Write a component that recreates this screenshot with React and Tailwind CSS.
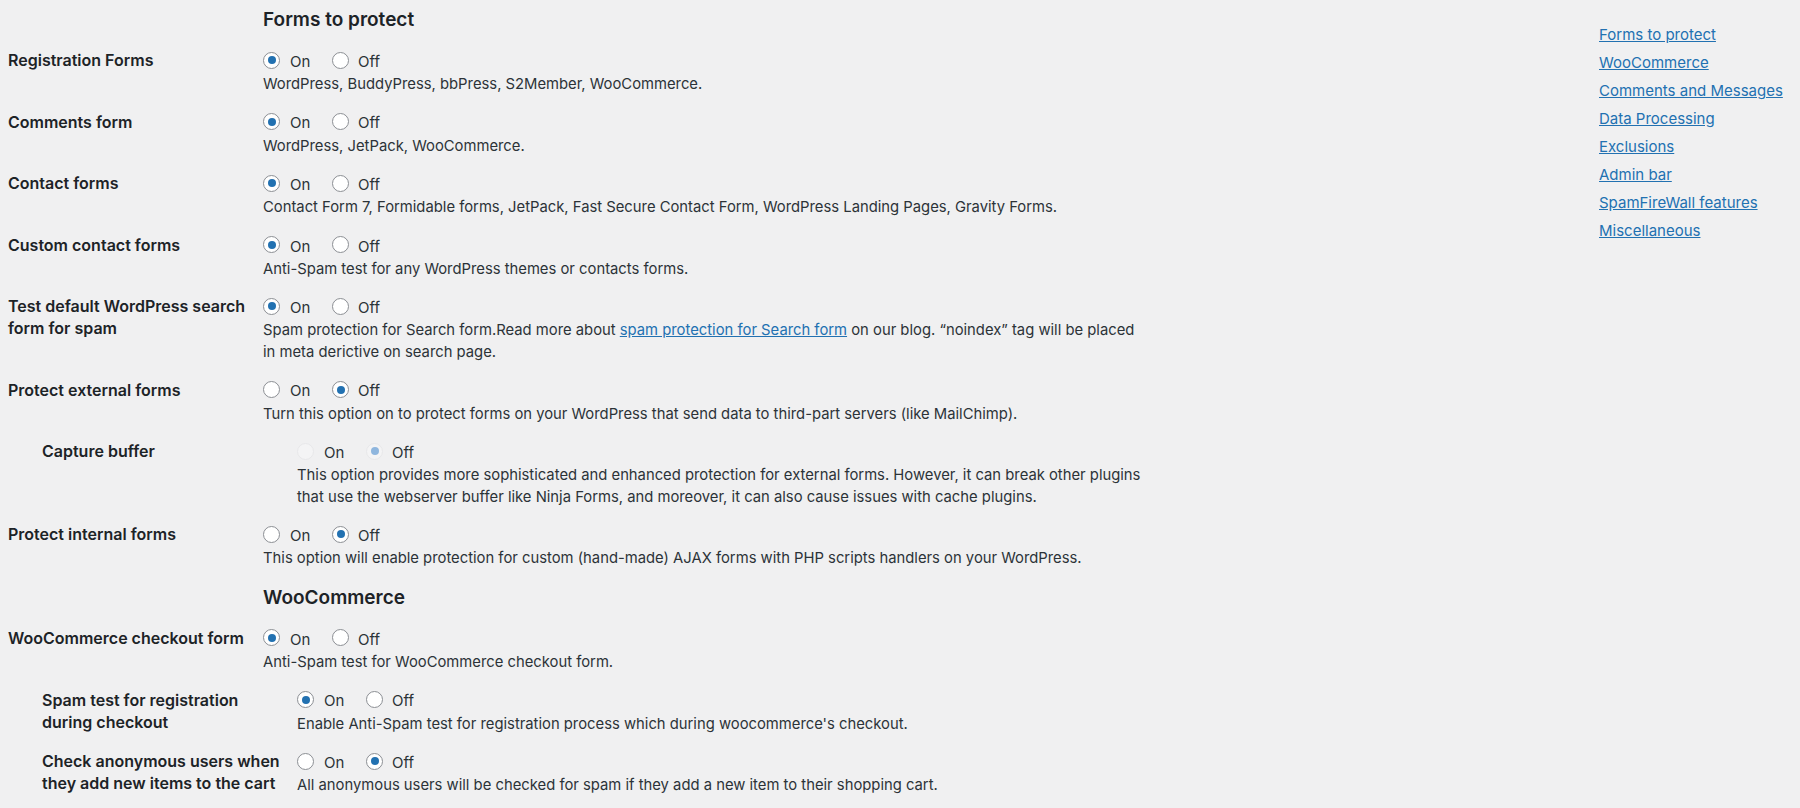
const sections = [
  {
    title: "Forms to protect",
    first: true,
    rows: [
      {
        label: "Registration Forms",
        on: true,
        desc: ["WordPress, BuddyPress, bbPress, S2Member, WooCommerce."],
      },
      {
        label: "Comments form",
        on: true,
        desc: ["WordPress, JetPack, WooCommerce."],
      },
      {
        label: "Contact forms",
        on: true,
        desc: [
          "Contact Form 7, Formidable forms, JetPack, Fast Secure Contact Form, WordPress Landing Pages, Gravity Forms.",
        ],
      },
      {
        label: "Custom contact forms",
        on: true,
        desc: ["Anti-Spam test for any WordPress themes or contacts forms."],
      },
      {
        label: ["Test default WordPress search", "form for spam"],
        on: true,
        search: true,
      },
      {
        label: "Protect external forms",
        on: false,
        desc: [
          "Turn this option on to protect forms on your WordPress that send data to third-part servers (like MailChimp).",
        ],
      },
      {
        label: "Capture buffer",
        on: false,
        sub: true,
        disabled: true,
        desc: [
          "This option provides more sophisticated and enhanced protection for external forms. However, it can break other plugins",
          "that use the webserver buffer like Ninja Forms, and moreover, it can also cause issues with cache plugins.",
        ],
      },
      {
        label: "Protect internal forms",
        on: false,
        desc: [
          "This option will enable protection for custom (hand-made) AJAX forms with PHP scripts handlers on your WordPress.",
        ],
      },
    ],
  },
  {
    title: "WooCommerce",
    rows: [
      {
        label: "WooCommerce checkout form",
        on: true,
        desc: ["Anti-Spam test for WooCommerce checkout form."],
      },
      {
        label: ["Spam test for registration", "during checkout"],
        on: true,
        sub: true,
        desc: [
          "Enable Anti-Spam test for registration process which during woocommerce's checkout.",
        ],
      },
      {
        label: ["Check anonymous users when", "they add new items to the cart"],
        on: false,
        sub: true,
        desc: [
          "All anonymous users will be checked for spam if they add a new item to their shopping cart.",
        ],
      },
    ],
  },
];

const navLinks = [
  "Forms to protect",
  "WooCommerce",
  "Comments and Messages",
  "Data Processing",
  "Exclusions",
  "Admin bar",
  "SpamFireWall features",
  "Miscellaneous",
];

function Radio({ checked, disabled }) {
  if (disabled) {
    return (
      <span className="flex h-[17px] w-[17px] items-center justify-center rounded-full border border-[#e8e8ea] bg-[#f4f4f5]">
        {checked && <span className="h-2 w-2 rounded-full bg-[#8fb6de]" />}
      </span>
    );
  }
  return (
    <span className="flex h-[17px] w-[17px] items-center justify-center rounded-full border border-[#8c8f94] bg-white">
      {checked && <span className="h-2 w-2 rounded-full bg-[#2271b1]" />}
    </span>
  );
}

function Row({ row }) {
  const label = Array.isArray(row.label) ? row.label : [row.label];

  return (
    <div className={`mb-[14px] flex ${row.sub ? "pl-[34px]" : ""}`}>
      <div className="w-[255px] shrink-0 pt-px text-[16px] font-semibold leading-[22px] text-[#1d2327]">
        {label.map((line, i) => (
          <div key={i}>{line}</div>
        ))}
      </div>

      <div className="text-[14.8px] text-[#2c3338]">
        <div className="flex h-6 items-center">
          <Radio checked={row.on} disabled={row.disabled} />
          <span className="ml-[10px] w-[42px] pt-[4px] text-[15px]">On</span>
          <Radio checked={!row.on} disabled={row.disabled} />
          <span className="ml-[9px] pt-[4px] text-[15px]">Off</span>
        </div>

        <div className="pt-[2px] leading-[21.6px]">
          {row.search ? (
            <>
              <div>
                Spam protection for Search form.Read more about{" "}
                <a href="#" className="text-[#2271b1] underline">
                  spam protection for Search form
                </a>{" "}
                on our blog. “noindex” tag will be placed
              </div>
              <div>in meta derictive on search page.</div>
            </>
          ) : (
            row.desc.map((line, i) => <div key={i}>{line}</div>)
          )}
        </div>
      </div>
    </div>
  );
}

export default function App() {
  return (
    <div className="flex h-[808px] w-[1800px] overflow-hidden bg-[#f0f0f1] font-['Inter',sans-serif] antialiased">
      <div className="flex-1 pl-2">
        {sections.map((section) => (
          <section key={section.title}>
            <h2
              className={`pl-[255px] text-[19px] font-semibold leading-7 text-[#1d2327] ${
                section.first ? "pt-[6px]" : "pt-0"
              } pb-[14px]`}
            >
              {section.title}
            </h2>

            {section.rows.map((row, i) => (
              <Row key={i} row={row} />
            ))}
          </section>
        ))}
      </div>

      {/* ================= SIDE NAV ================= */}
      <nav className="w-[201px] shrink-0 pt-[23px]">
        {navLinks.map((link) => (
          <div key={link} className="h-[28px] leading-[22px]">
            <a href="#" className="text-[15px] text-[#2271b1] underline">
              {link}
            </a>
          </div>
        ))}
      </nav>
    </div>
  );
}
